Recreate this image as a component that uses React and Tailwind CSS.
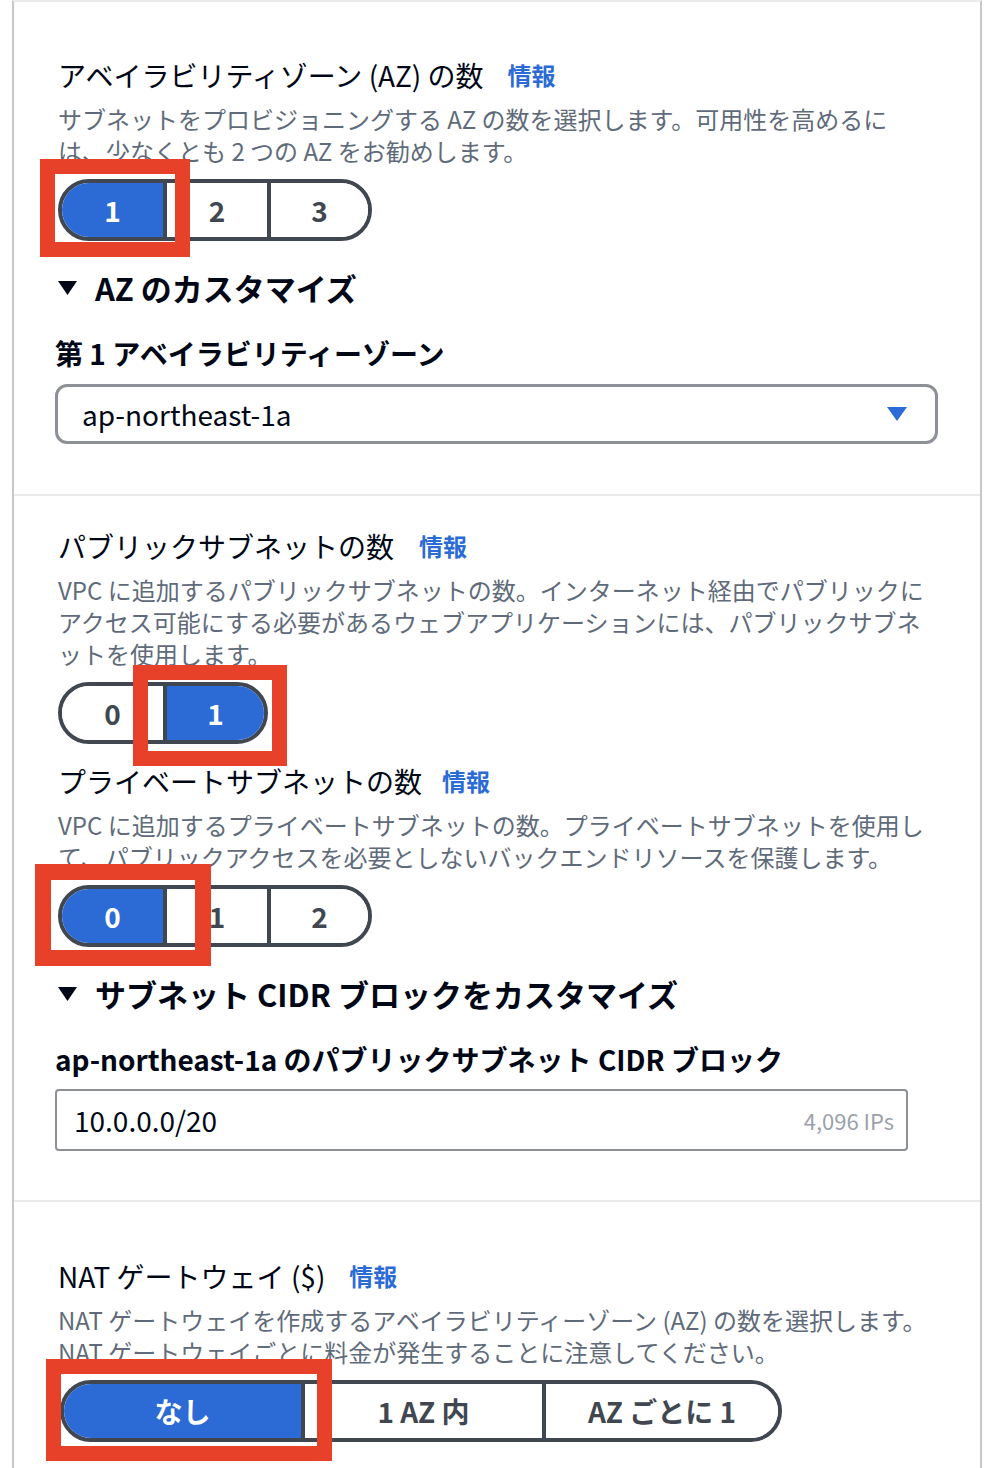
import React from "react";

const font = "font-['Noto_Sans_CJK_JP','Noto_Sans',sans-serif]";

function Title({ children, info = true, gap = "ml-[26px]" }) {
  return (
    <div className="flex items-center h-[36px]">
      <span className="text-[28px] leading-[36px] text-[#000716]">{children}</span>
      {info && (
        <span className={`${gap} text-[24px] leading-[36px] font-bold text-[#2a6bd6]`}>
          情報
        </span>
      )}
    </div>
  );
}

function Desc({ lines }) {
  return (
    <div className="mt-[10px] text-[24px] leading-[32px] text-[#5f6b7a] whitespace-nowrap">
      {lines.map((l, i) => (
        <div key={i}>{l}</div>
      ))}
    </div>
  );
}

function Segmented({ options, selected, widths, mark }) {
  return (
    <div className="relative mt-[12px] w-fit">
      <div className="flex h-[62px] border-[4px] border-[#414750] rounded-full overflow-hidden">
        {options.map((o, i) => (
          <div
            key={o}
            className={`flex items-center justify-center text-[28px] font-bold ${
              i > 0 ? "border-l-[4px] border-[#414750]" : ""
            } ${i === selected ? "bg-[#2c6ad6] text-white" : "bg-white text-[#414750]"}`}
            style={{ width: widths[i] }}
          >
            {o}
          </div>
        ))}
      </div>
      {mark}
    </div>
  );
}

function Expander({ children }) {
  return (
    <div className="flex items-center h-[36px] gap-[18px]">
      <svg width="19" height="14" viewBox="0 0 19 14">
        <polygon points="0,0 19,0 9.5,14" fill="#000716" />
      </svg>
      <span className="text-[31px] leading-[36px] font-bold text-[#000716] whitespace-nowrap">
        {children}
      </span>
    </div>
  );
}

function Label({ children }) {
  return (
    <div className="-ml-[3px] h-[36px] text-[28px] leading-[36px] font-bold text-[#000716] whitespace-nowrap">
      {children}
    </div>
  );
}

export default function App() {
  return (
    <div className={`${font} bg-white min-h-[1468px] w-[994px] overflow-hidden`}>
      <div className="ml-[12px] w-[970px] border-l-2 border-r-2 border-[#c6c6cd] border-t-2 border-t-[#e9ebed] min-h-[1468px]">
        {/* AZ count */}
        <section className="pl-[44px] pt-[55px] pb-[50px]">
          <Title gap="ml-[24px]">アベイラビリティゾーン (AZ) の数</Title>
          <Desc
            lines={[
              "サブネットをプロビジョニングする AZ の数を選択します。可用性を高めるに",
              "は、少なくとも 2 つの AZ をお勧めします。",
            ]}
          />
          <Segmented
            options={["1", "2", "3"]}
            selected={0}
            widths={[101, 104, 101]}
            mark={
              <div className="absolute left-[-18px] top-[-20px] w-[150px] h-[98px] border-[15px] border-[#e8412a]" />
            }
          />
          <div className="mt-[29px]">
            <Expander>AZ のカスタマイズ</Expander>
          </div>
          <div className="mt-[29px]">
            <Label>第 1 アベイラビリティーゾーン</Label>
          </div>
          <div className="-ml-[3px] mt-[13px] w-[883px] h-[60px] border-[3px] border-[#8d9096] rounded-[12px] flex items-center justify-between pl-[24px] pr-[28px]">
            <span className="text-[28px] text-[#000716]">ap-northeast-1a</span>
            <svg width="20" height="14" viewBox="0 0 20 14">
              <polygon points="0,0 20,0 10,14" fill="#2c6ad6" />
            </svg>
          </div>
        </section>

        {/* Subnets */}
        <section className="border-t-2 border-[#e9ebed] pl-[44px] pt-[32px] pb-[49px]">
          <Title gap="ml-[25px]">パブリックサブネットの数</Title>
          <Desc
            lines={[
              "VPC に追加するパブリックサブネットの数。インターネット経由でパブリックに",
              "アクセス可能にする必要があるウェブアプリケーションには、パブリックサブネ",
              "ットを使用します。",
            ]}
          />
          <Segmented
            options={["0", "1"]}
            selected={1}
            widths={[101, 101]}
            mark={
              <div className="absolute left-[75px] top-[-17px] w-[154px] h-[101px] border-[15px] border-[#e8412a]" />
            }
          />
          <div className="mt-[19px]">
            <Title gap="ml-[20px]">プライベートサブネットの数</Title>
          </div>
          <Desc
            lines={[
              "VPC に追加するプライベートサブネットの数。プライベートサブネットを使用し",
              "て、パブリックアクセスを必要としないバックエンドリソースを保護します。",
            ]}
          />
          <Segmented
            options={["0", "1", "2"]}
            selected={0}
            widths={[101, 104, 101]}
            mark={
              <div className="absolute left-[-23px] top-[-21px] w-[176px] h-[102px] border-[16px] border-[#e8412a]" />
            }
          />
          <div className="mt-[29px]">
            <Expander>サブネット CIDR ブロックをカスタマイズ</Expander>
          </div>
          <div className="mt-[29px]">
            <Label>ap-northeast-1a のパブリックサブネット CIDR ブロック</Label>
          </div>
          <div className="-ml-[3px] mt-[12px] w-[853px] h-[62px] border-2 border-[#8d9096] rounded-[4px] flex items-center justify-between pl-[17px] pr-[12px]">
            <span className="text-[28px] text-[#000716]">10.0.0.0/20</span>
            <span className="text-[22px] text-[#9ba1aa]">4,096 IPs</span>
          </div>
        </section>

        {/* NAT */}
        <section className="border-t-2 border-[#e9ebed] pl-[44px] pt-[56px] pb-[40px]">
          <Title gap="ml-[24px]">NAT ゲートウェイ ($)</Title>
          <Desc
            lines={[
              "NAT ゲートウェイを作成するアベイラビリティーゾーン (AZ) の数を選択します。",
              "NAT ゲートウェイごとに料金が発生することに注意してください。",
            ]}
          />
          <div className="ml-[2px]">
            <Segmented
              options={["なし", "1 AZ 内", "AZ ごとに 1"]}
              selected={0}
              widths={[237, 241, 236]}
              mark={
                <div className="absolute left-[-14px] top-[-21px] w-[286px] h-[102px] border-[15px] border-[#e8412a]" />
              }
            />
          </div>
        </section>
      </div>
    </div>
  );
}
